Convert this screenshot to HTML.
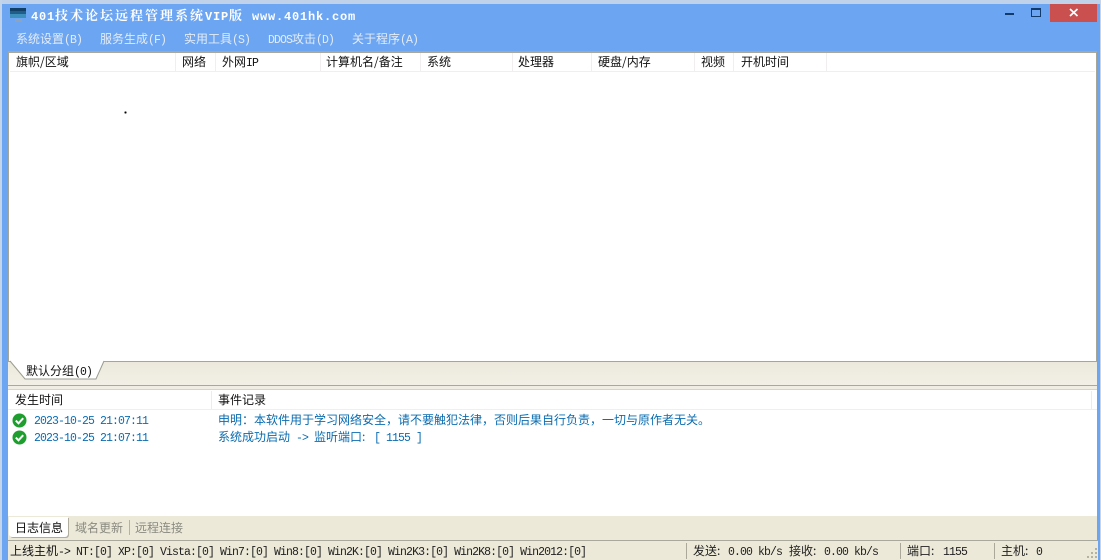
<!DOCTYPE html>
<html><head><meta charset="utf-8">
<style>
html,body{margin:0;padding:0;width:1101px;height:560px;overflow:hidden;background:#6ca5f2}
body{position:relative;font:12px/14px "WenQuanYi Zen Hei","Noto Sans CJK SC",sans-serif;color:#111}
div{position:absolute;white-space:nowrap}
i{font:normal 11.5px/14px "Liberation Mono",monospace;letter-spacing:-.9px}
.m{color:#e3ecf6}
.h{top:55px;color:#111}
.s{position:absolute;width:1px;top:53px;height:18px;background:#f0eeee}
.b{color:#0a6cb0}
.st{top:544px;color:#222}
.sep{top:543px;width:1px;height:16px;background:#aca899}
.t{font:bold 13px/16px "Noto Serif CJK SC",serif;color:#fff;letter-spacing:2px}
.t b{font:bold 12px/16px "Liberation Mono",monospace;letter-spacing:.8px}
</style></head><body>
<div style="left:0;top:0;width:1101px;height:4px;background:#bfd2ea"></div>
<div style="left:0;top:0;width:2px;height:560px;background:#c4d5ea"></div>
<div style="left:1100px;top:0;width:1px;height:560px;background:#c4d5ea"></div>

<!-- icon -->
<svg style="position:absolute;left:10px;top:8px" width="17" height="16"><rect width="16" height="10" fill="#1f5d8a"/><rect y="0" width="16" height="3" fill="#123f66"/><rect y="6" width="16" height="4" fill="#3f8fbd"/><rect x="5" y="11" width="7" height="3" fill="#8fa4b8"/></svg>
<div class="t" style="left:31px;top:7px"><b>401</b></div>
<div class="t" style="left:55px;top:7px">技术论坛远程管理系统</div>
<div class="t" style="left:205px;top:7px"><b>VIP</b></div>
<div class="t" style="left:229px;top:7px">版</div>
<div class="t" style="left:252px;top:7px"><b>www.401hk.com</b></div>

<!-- window buttons -->
<div style="left:1005px;top:13px;width:9px;height:2px;background:#123a6b"></div>
<div style="left:1031px;top:8px;width:8px;height:6px;border:1px solid #123a6b;border-top-width:2px"></div>
<div style="left:1050px;top:4px;width:47px;height:18px;background:#c9504f"></div>
<svg style="position:absolute;left:1069px;top:8px" width="10" height="9"><path d="M1 1L8.5 8M8.5 1L1 8" stroke="#fff" stroke-width="1.7"/></svg>

<!-- menu -->
<div class="m" style="left:16px;top:32px">系统设置<i>(B)</i></div>
<div class="m" style="left:100px;top:32px">服务生成<i>(F)</i></div>
<div class="m" style="left:184px;top:32px">实用工具<i>(S)</i></div>
<div class="m" style="left:268px;top:32px"><i>DDOS</i>攻击<i>(D)</i></div>
<div class="m" style="left:352px;top:32px">关于程序<i>(A)</i></div>

<!-- tab strip -->
<div style="left:8px;top:362px;width:1089px;height:24px;background:linear-gradient(#ece9dc,#f2f0e6)"></div>

<!-- list -->
<div style="left:8px;top:51px;width:1087px;height:308px;background:#fff;border:1px solid #a5a598;border-top:2px solid #a8a89c"></div>
<div style="left:10px;top:71px;width:1085px;height:1px;background:#f0efec"></div>
<div class="h" style="left:16px">旗帜/区域</div>
<div class="s" style="left:175px"></div>
<div class="h" style="left:182px">网络</div>
<div class="s" style="left:215px"></div>
<div class="h" style="left:222px">外网<i>IP</i></div>
<div class="s" style="left:320px"></div>
<div class="h" style="left:326px">计算机名/备注</div>
<div class="s" style="left:420px"></div>
<div class="h" style="left:427px">系统</div>
<div class="s" style="left:512px"></div>
<div class="h" style="left:518px">处理器</div>
<div class="s" style="left:591px"></div>
<div class="h" style="left:598px">硬盘/内存</div>
<div class="s" style="left:694px"></div>
<div class="h" style="left:701px">视频</div>
<div class="s" style="left:733px"></div>
<div class="h" style="left:741px">开机时间</div>
<div class="s" style="left:826px"></div>
<div style="left:124px;top:111px;width:3px;height:3px;background:radial-gradient(#000 45%,transparent 60%)"></div>

<svg style="position:absolute;left:8px;top:360px" width="100" height="21"><path d="M2 1L17 19H88L96 1" fill="#fff" stroke="#9c9c90"/></svg>
<div style="left:26px;top:364px">默认分组<i>(0)</i></div>
<div style="left:8px;top:385px;width:1089px;height:1px;background:#a8a89c"></div>
<div style="left:8px;top:386px;width:1089px;height:3px;background:#f0eee4"></div>

<!-- log -->
<div style="left:8px;top:389px;width:1089px;height:126px;background:#fff;border-bottom:1px solid #a8a89c;border-top:1px solid #d6d3c8"></div>
<div style="left:8px;top:409px;width:1089px;height:1px;background:#f0efec"></div>
<div style="left:211px;top:391px;width:1px;height:18px;background:#eeece6"></div>
<div style="left:1091px;top:391px;width:1px;height:18px;background:#eeece6"></div>
<div style="left:15px;top:393px">发生时间</div>
<div style="left:218px;top:393px">事件记录</div>
<svg style="position:absolute;left:12px;top:413px" width="15" height="15"><circle cx="7.5" cy="7.5" r="7" fill="#1e9e2e"/><path d="M3.8 7.6L6.5 10.3L11.2 5.2" fill="none" stroke="#fff" stroke-width="2"/></svg>
<svg style="position:absolute;left:12px;top:430px" width="15" height="15"><circle cx="7.5" cy="7.5" r="7" fill="#1e9e2e"/><path d="M3.8 7.6L6.5 10.3L11.2 5.2" fill="none" stroke="#fff" stroke-width="2"/></svg>
<div class="b" style="left:34px;top:413px"><i>2023-10-25 21:07:11</i></div>
<div class="b" style="left:34px;top:430px"><i>2023-10-25 21:07:11</i></div>
<div class="b" style="left:218px;top:413px">申明：本软件用于学习网络安全，请不要触犯法律，否则后果自行负责，一切与原作者无关。</div>
<div class="b" style="left:218px;top:430px">系统成功启动</div>
<div class="b" style="left:296px;top:430px"><i>-&gt;</i></div>
<div class="b" style="left:314px;top:430px">监听端口:</div>
<div class="b" style="left:374px;top:430px"><i>[ 1155 ]</i></div>

<!-- bottom tabs -->
<div style="left:8px;top:516px;width:1089px;height:24px;background:#ece9d9"></div>
<div style="left:9px;top:517px;width:59px;height:20px;background:#fff;border-radius:0 0 3px 3px;box-shadow:1px 1px 0 #b0ad9f"></div>
<div style="left:15px;top:521px">日志信息</div>
<div style="left:75px;top:521px;color:#8a8a80">域名更新</div>
<div style="left:129px;top:520px;width:1px;height:15px;background:#b5b2a4"></div>
<div style="left:135px;top:521px;color:#8a8a80">远程连接</div>

<!-- status -->
<div style="left:8px;top:540px;width:1090px;height:1px;background:#a8a89c"></div>
<div style="left:8px;top:541px;width:1090px;height:19px;background:#ece9d8"></div>
<div class="st" style="left:10px;color:#111">上线主机<i>-&gt;</i></div>
<div class="st" style="left:76px"><i>NT:[0] XP:[0] Vista:[0] Win7:[0] Win8:[0] Win2K:[0] Win2K3:[0] Win2K8:[0] Win2012:[0]</i></div>
<div class="sep" style="left:686px"></div>
<div class="st" style="left:693px">发送:</div>
<div class="st" style="left:728px"><i>0.00 kb/s</i></div>
<div class="st" style="left:789px">接收:</div>
<div class="st" style="left:824px"><i>0.00 kb/s</i></div>
<div class="sep" style="left:900px"></div>
<div class="st" style="left:907px">端口:</div>
<div class="st" style="left:943px"><i>1155</i></div>
<div class="sep" style="left:994px"></div>
<div class="st" style="left:1001px">主机:</div>
<div class="st" style="left:1036px"><i>0</i></div>
<svg style="position:absolute;left:1086px;top:547px" width="12" height="12" fill="#b5b2a4"><rect x="9" y="1" width="2" height="2"/><rect x="5" y="5" width="2" height="2"/><rect x="9" y="5" width="2" height="2"/><rect x="1" y="9" width="2" height="2"/><rect x="5" y="9" width="2" height="2"/><rect x="9" y="9" width="2" height="2"/></svg>
</body></html>
